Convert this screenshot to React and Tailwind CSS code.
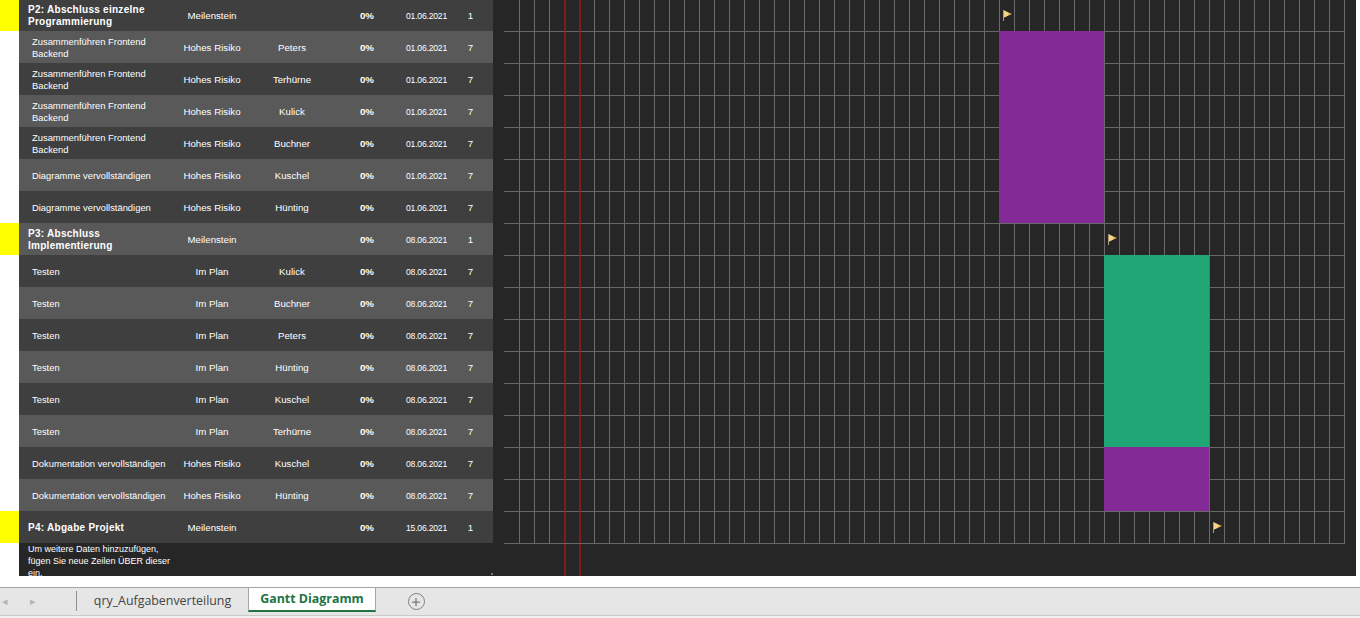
import { Plus } from 'lucide-react';

// Gantt sheet rows: name, status, owner, start, days, bar colour, flag column
const rows = [
    { name: 'P2: Abschluss einzelne Programmierung', status: 'Meilenstein', owner: '', start: '01.06.2021', days: 1, flag: 33 },
    { name: 'Zusammenführen Frontend Backend', status: 'Hohes Risiko', owner: 'Peters', start: '01.06.2021', days: 7, bar: 'purple' },
    { name: 'Zusammenführen Frontend Backend', status: 'Hohes Risiko', owner: 'Terhürne', start: '01.06.2021', days: 7, bar: 'purple' },
    { name: 'Zusammenführen Frontend Backend', status: 'Hohes Risiko', owner: 'Kulick', start: '01.06.2021', days: 7, bar: 'purple' },
    { name: 'Zusammenführen Frontend Backend', status: 'Hohes Risiko', owner: 'Buchner', start: '01.06.2021', days: 7, bar: 'purple' },
    { name: 'Diagramme vervollständigen', status: 'Hohes Risiko', owner: 'Kuschel', start: '01.06.2021', days: 7, bar: 'purple' },
    { name: 'Diagramme vervollständigen', status: 'Hohes Risiko', owner: 'Hünting', start: '01.06.2021', days: 7, bar: 'purple' },
    { name: 'P3: Abschluss Implementierung', status: 'Meilenstein', owner: '', start: '08.06.2021', days: 1, flag: 40 },
    { name: 'Testen', status: 'Im Plan', owner: 'Kulick', start: '08.06.2021', days: 7, bar: 'green' },
    { name: 'Testen', status: 'Im Plan', owner: 'Buchner', start: '08.06.2021', days: 7, bar: 'green' },
    { name: 'Testen', status: 'Im Plan', owner: 'Peters', start: '08.06.2021', days: 7, bar: 'green' },
    { name: 'Testen', status: 'Im Plan', owner: 'Hünting', start: '08.06.2021', days: 7, bar: 'green' },
    { name: 'Testen', status: 'Im Plan', owner: 'Kuschel', start: '08.06.2021', days: 7, bar: 'green' },
    { name: 'Testen', status: 'Im Plan', owner: 'Terhürne', start: '08.06.2021', days: 7, bar: 'green' },
    { name: 'Dokumentation vervollständigen', status: 'Hohes Risiko', owner: 'Kuschel', start: '08.06.2021', days: 7, bar: 'purple', late: true },
    { name: 'Dokumentation vervollständigen', status: 'Hohes Risiko', owner: 'Hünting', start: '08.06.2021', days: 7, bar: 'purple', late: true },
    { name: 'P4: Abgabe Projekt', status: 'Meilenstein', owner: '', start: '15.06.2021', days: 1, flag: 47 },
];

const cols = Array.from({ length: 57 }, (_, i) => i);

const Flag = () => (
    <svg width="10" height="11" viewBox="0 0 10 11" className="ml-[3px] shrink-0">
        <rect x="0" y="0" width="1" height="11" fill="#a89a78" />
        <path d="M1 0.5 L9 4 L1 7.5 Z" fill="#e8b85a" />
        <path d="M1 0.5 L5 2.5 L5 5.5 L1 7.5 Z" fill="#f4d488" />
    </svg>
);

const cellClass = (i, row, rowIndex) => {
    const inPurple = row.bar === 'purple' && (row.late ? i >= 40 && i < 47 : i >= 33 && i < 40);
    const inGreen = row.bar === 'green' && i >= 40 && i < 47;
    let cls = 'flex items-center h-full shrink-0 ' + (i === 56 ? 'w-px ' : 'w-[15px] ');
    if (inPurple) return cls + 'bg-[#832a96]';
    if (inGreen) return cls + 'bg-[#21a675]';
    if (rowIndex > 0) cls += 'border-t border-t-[#676767] ';
    if (i === 4 || i === 5) return cls + 'border-l-2 border-l-[#7d1c1c]';
    if (i > 0) return cls + 'border-l border-l-[#6a6a6a]';
    return cls;
};

const GanttRow = ({ row, index }) => {
    const milestone = !!row.flag;
    const bg = index % 2 === 0 ? 'bg-[#3f3f3f]' : 'bg-[#595959]';
    return (
        <div className={index === 0 ? 'flex h-[31px]' : 'flex h-[32px]'}>
            <div className={milestone ? 'w-[19px] shrink-0 bg-[#ffff00]' : 'w-[19px] shrink-0 bg-white'} />
            <div className={`flex items-center w-[474px] shrink-0 pt-px text-white text-[9.7px] leading-[12px] ${bg}`}>
                <div className={milestone ? 'w-[153px] pl-[9px] text-[10px] font-bold tracking-[0.27px]' : 'w-[153px] pl-[13px] text-[9.4px]'}>{row.name}</div>
                <div className="w-[80px] text-center">{row.status}</div>
                <div className="w-[80px] text-center">{row.owner}</div>
                <div className="w-[70px] text-center font-bold">0%</div>
                <div className="w-[48px] pl-px text-center text-[8.6px] tracking-[-0.2px]">{row.start}</div>
                <div className="w-[43px] pr-[2px] text-center">{row.days}</div>
            </div>
            <div className="w-[11px] shrink-0" />
            <div className="flex">
                {cols.map((i) => (
                    <div key={i} className={cellClass(i, row, index)}>
                        {row.flag === i && <Flag />}
                    </div>
                ))}
            </div>
        </div>
    );
};

export default function App() {
    return (
        <div className="w-[1360px] h-[618px] overflow-hidden bg-white font-['Liberation_Sans',sans-serif]">
            <div className="h-[576px] pr-[4px]">
                <div className="h-full bg-[#262626]">
                    {rows.map((row, i) => (
                        <GanttRow key={i} row={row} index={i} />
                    ))}
                    <div className="flex h-[33px] overflow-hidden">
                        <div className="w-[19px] shrink-0 bg-white" />
                        <div className="flex w-[474px] shrink-0 text-white text-[9px] leading-[12px]">
                            <p className="w-[153px] pl-[9px]">Um weitere Daten hinzuzufügen, fügen Sie neue Zeilen ÜBER dieser ein.</p>
                            <div className="flex-1 flex justify-end items-end">
                                <div className="w-[2px] h-[2px] mb-px bg-[#777777]" />
                            </div>
                        </div>
                        <div className="w-[11px] shrink-0" />
                        <div className="flex flex-col">
                            <div className="h-px w-[841px] bg-[#676767]" />
                            <div className="flex flex-1 pl-[60px]">
                                <div className="w-[15px] border-l-2 border-l-[#7d1c1c]" />
                                <div className="w-[15px] border-l-2 border-l-[#7d1c1c]" />
                            </div>
                        </div>
                    </div>
                </div>
            </div>

            <div className="h-[11px]" />
            <div className="flex h-[29px] items-start bg-[#e6e6e6] border-t border-t-[#a6a6a6] border-b border-b-[#c9c9c9] font-['Open_Sans',sans-serif]">
                <div className="flex items-center w-[76px] h-[26px] text-[11px] text-[#b5b5b5]">
                    <span className="ml-[2px] w-[28px]">◂</span>
                    <span>▸</span>
                </div>
                <div className="flex items-center h-[26px]">
                    <div className="w-px h-[20px] bg-[#8f8f8f]" />
                    <div className="w-[171px] text-center text-[12.4px] text-[#444444]">qry_Aufgabenverteilung</div>
                </div>
                <div className="flex items-center justify-center w-[128px] h-[24px] bg-white border-x border-x-[#a6a6a6] border-b-2 border-b-[#217346] text-[12.4px] font-bold text-[#217346]">
                    Gantt Diagramm
                </div>
                <div className="flex items-center justify-center ml-[31px] w-[18px] h-[27px]">
                    <div className="flex items-center justify-center w-[17px] h-[17px] rounded-full border border-[#808080]">
                        <Plus size={12} strokeWidth={2.5} className="text-[#777777]" />
                    </div>
                </div>
            </div>
            <div className="h-[2px] bg-[#f1f1f1]" />
        </div>
    );
}
